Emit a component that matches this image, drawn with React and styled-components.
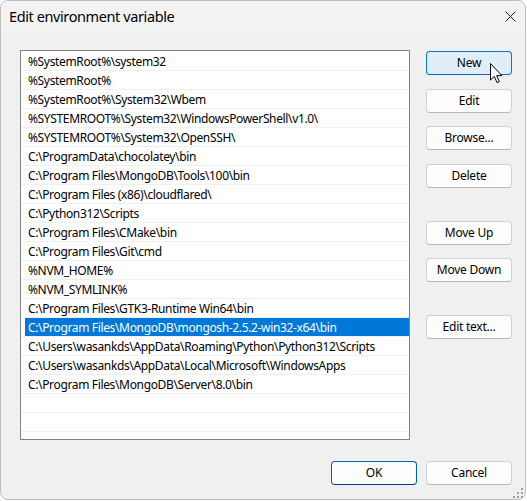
import React from "react";
import styled, { createGlobalStyle } from "styled-components";

const Global = createGlobalStyle`
  html, body { margin: 0; padding: 0; background: #ffffff; }
  body { font-family: "Segoe UI", "Noto Sans", "Open Sans", sans-serif; }
  #root { width: 527px; height: 501px; }
`;

const Window = styled.div`
  position: relative;
  width: 526px;
  height: 500px;
  box-sizing: border-box;
  border: 1px solid #bcbcbc;
  border-radius: 8px;
  overflow: hidden;
  background: #f0f0f0;
  display: flex;
  flex-direction: column;
  font-family: "Segoe UI", "Noto Sans", sans-serif;
  color: #000;
`;

const TitleBar = styled.div`
  height: 31px;
  flex: none;
  display: flex;
  align-items: center;
  justify-content: space-between;
  padding-left: 8px;
  background: #f3f3f3;
`;

const Title = styled.span`
  font-size: 14.5px;
  letter-spacing: -0.4px;
  color: #000;
  padding-bottom: 1px;
`;

const CloseButton = styled.div`
  width: 44px;
  height: 31px;
  display: flex;
  align-items: center;
  justify-content: center;
  margin-right: -7px;
`;

const Client = styled.div`
  flex: 1;
  display: flex;
  flex-direction: column;
  padding: 18px 13px 0 19px;
`;

const Main = styled.div`
  display: flex;
  gap: 16px;
`;

const List = styled.div`
  width: 390px;
  height: 390px;
  box-sizing: border-box;
  border: 1px solid #838383;
  background: #fff;
  overflow: hidden;
  padding-top: 1px;
`;

const Row = styled.div`
  height: 18px;
  border-bottom: 1px solid #f0f0f0;
  display: flex;
`;

const Label = styled.div`
  flex: 1;
  box-sizing: border-box;
  height: 18px;
  overflow: hidden;
  margin-left: 4px;
  padding-left: 3px;
  padding-top: 1px;
  font-size: 12px;
  letter-spacing: -0.35px;
  line-height: 17px;
  white-space: nowrap;
  background: ${(p) => (p.$selected ? "#0078d7" : "transparent")};
  color: ${(p) => (p.$selected ? "#fff" : "#000")};
`;

const ButtonColumn = styled.div`
  width: 86px;
  padding-top: 1px;
  display: flex;
  flex-direction: column;
  gap: 33px;
`;

const ButtonGroup = styled.div`
  display: flex;
  flex-direction: column;
  gap: 13.5px;
`;

const Button = styled.div`
  width: 86px;
  height: 24px;
  box-sizing: border-box;
  border-radius: 4px;
  border: 1px solid ${(p) => (p.$hover ? "#0078d4" : p.$default ? "#005fb8" : "#d2d2d2")};
  border-bottom-color: ${(p) => (p.$hover ? "#0067c0" : p.$default ? "#003e92" : "#b9b9b9")};
  background: ${(p) => (p.$hover ? "#e0eef9" : "#fdfdfd")};
  display: flex;
  align-items: center;
  justify-content: center;
  font-size: 12px;
  letter-spacing: -0.25px;
  color: #000;
  padding-bottom: 1px;
`;

const Footer = styled.div`
  margin-top: 21px;
  display: flex;
  justify-content: flex-end;
  gap: 9px;
`;

const Cursor = styled.svg`
  position: absolute;
  left: 489px;
  top: 62px;
`;

const Grip = styled.svg`
  position: absolute;
  right: 2px;
  bottom: 1px;
`;

const rows = [
  "%SystemRoot%\\system32",
  "%SystemRoot%",
  "%SystemRoot%\\System32\\Wbem",
  "%SYSTEMROOT%\\System32\\WindowsPowerShell\\v1.0\\",
  "%SYSTEMROOT%\\System32\\OpenSSH\\",
  "C:\\ProgramData\\chocolatey\\bin",
  "C:\\Program Files\\MongoDB\\Tools\\100\\bin",
  "C:\\Program Files (x86)\\cloudflared\\",
  "C:\\Python312\\Scripts",
  "C:\\Program Files\\CMake\\bin",
  "C:\\Program Files\\Git\\cmd",
  "%NVM_HOME%",
  "%NVM_SYMLINK%",
  "C:\\Program Files\\GTK3-Runtime Win64\\bin",
  "C:\\Program Files\\MongoDB\\mongosh-2.5.2-win32-x64\\bin",
  "C:\\Users\\wasankds\\AppData\\Roaming\\Python\\Python312\\Scripts",
  "C:\\Users\\wasankds\\AppData\\Local\\Microsoft\\WindowsApps",
  "C:\\Program Files\\MongoDB\\Server\\8.0\\bin",
  "",
  "",
  "",
];

export default function App() {
  return (
    <>
      <Global />
      <Window>
        <TitleBar>
          <Title>Edit environment variable</Title>
          <CloseButton>
            <svg width="11" height="11" viewBox="0 0 11 11">
              <path d="M0.5 0.5 L10.5 10.5 M10.5 0.5 L0.5 10.5" stroke="#1b1b1b" strokeWidth="1" fill="none" />
            </svg>
          </CloseButton>
        </TitleBar>
        <Client>
          <Main>
            <List>
              {rows.map((r, i) => (
                <Row key={i}>
                  <Label $selected={i === 14}>{r}</Label>
                </Row>
              ))}
            </List>
            <ButtonColumn>
              <ButtonGroup>
                <Button $hover>New</Button>
                <Button>Edit</Button>
                <Button>Browse...</Button>
                <Button>Delete</Button>
              </ButtonGroup>
              <ButtonGroup>
                <Button>Move Up</Button>
                <Button>Move Down</Button>
              </ButtonGroup>
              <ButtonGroup>
                <Button>Edit text...</Button>
              </ButtonGroup>
            </ButtonColumn>
          </Main>
          <Footer>
            <Button $default>OK</Button>
            <Button>Cancel</Button>
          </Footer>
        </Client>
        <Grip width="10" height="10" viewBox="0 0 10 10">
          <g fill="#a0a0a0">
            <rect x="8" y="0" width="2" height="2" />
            <rect x="4" y="4" width="2" height="2" />
            <rect x="8" y="4" width="2" height="2" />
            <rect x="0" y="8" width="2" height="2" />
            <rect x="4" y="8" width="2" height="2" />
            <rect x="8" y="8" width="2" height="2" />
          </g>
        </Grip>
        <Cursor width="14" height="21" viewBox="0 0 14 21">
          <path
            d="M0.5 0.5 L0.5 17 L4.3 13.4 L7 19.6 L9.3 18.6 L6.7 12.6 L11.8 12.6 Z"
            fill="#fff"
            stroke="#000"
            strokeWidth="1"
            strokeLinejoin="miter"
          />
        </Cursor>
      </Window>
    </>
  );
}
